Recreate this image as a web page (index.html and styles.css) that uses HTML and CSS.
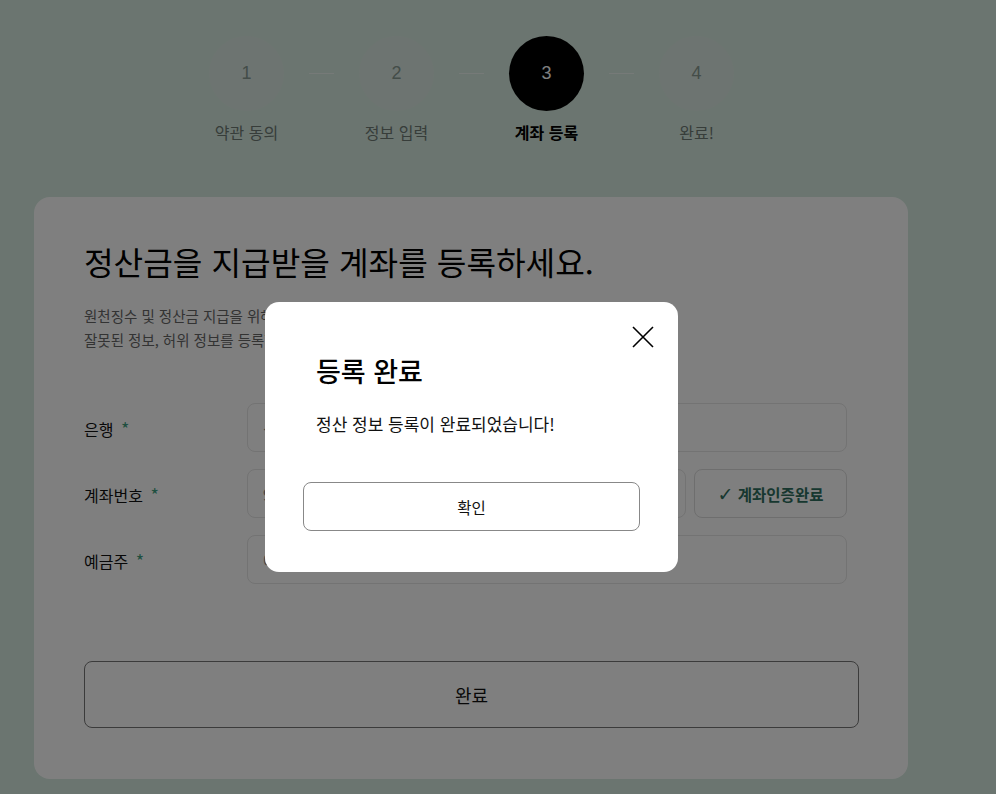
FILE: index.html
```html
<!DOCTYPE html>
<html lang="ko">
<head>
    <meta charset="UTF-8">
    <meta name="viewport" content="width=device-width, initial-scale=1.0">
    <title>계좌 등록</title>
    <link rel="stylesheet" href="styles.css">
</head>
<body>
<div class="wrap">
    <div class="stepper">
        <div class="step">
            <div class="circle">1</div>
            <div class="step-label">약관 동의</div>
        </div>
        <div class="line"></div>
        <div class="step">
            <div class="circle">2</div>
            <div class="step-label">정보 입력</div>
        </div>
        <div class="line"></div>
        <div class="step active">
            <div class="circle">3</div>
            <div class="step-label">계좌 등록</div>
        </div>
        <div class="line"></div>
        <div class="step">
            <div class="circle">4</div>
            <div class="step-label">완료!</div>
        </div>
    </div>

    <div class="card">
        <h1>정산금을 지급받을 계좌를 등록하세요.</h1>
        <p class="desc">
            원천징수 및 정산금 지급을 위해 정확한 계좌 정보를 입력해 주세요.<br>
            잘못된 정보, 허위 정보를 등록할 경우 정산이 지연될 수 있습니다.
        </p>

        <div class="form">
            <div class="row">
                <label>은행 <span class="req">*</span></label>
                <div class="input">선택해 주세요</div>
            </div>
            <div class="row">
                <label>계좌번호 <span class="req">*</span></label>
                <div class="input">92960201041</div>
                <button class="verify"><span class="check">✓</span> 계좌인증완료</button>
            </div>
            <div class="row">
                <label>예금주 <span class="req">*</span></label>
                <div class="input">예금주명</div>
            </div>
        </div>

        <button class="submit">완료</button>
    </div>
</div>

<div class="overlay">
    <div class="modal">
        <button class="close" aria-label="닫기">
            <svg width="22" height="22" viewBox="0 0 22 22">
                <path d="M1 1 L21 21 M21 1 L1 21" stroke="#000" stroke-width="1.6" fill="none"/>
            </svg>
        </button>
        <h2>등록 완료</h2>
        <p class="msg">정산 정보 등록이 완료되었습니다!</p>
        <button class="ok">확인</button>
    </div>
</div>
</body>
</html>
```

FILE: styles.css
```css
body {
    margin: 0;
    padding: 0;
    background-color: #d7ebe1;
    font-family: "Noto Sans CJK KR", "Noto Sans", sans-serif;
    color: #111;
    overflow: hidden;
}
.wrap {
    width: 874px;
    margin-left: 34px;
    padding-top: 36px;
}
.stepper {
    display: flex;
    justify-content: center;
    align-items: flex-start;
    padding-left: 1px;
}
.step {
    width: 75px;
    display: flex;
    flex-direction: column;
    align-items: center;
}
.circle {
    width: 75px;
    height: 75px;
    border-radius: 50%;
    background-color: #dbe9e2;
    color: #889a92;
    font-family: "Liberation Sans", Arial, sans-serif;
    font-size: 18px;
    display: flex;
    align-items: center;
    justify-content: center;
}
.step-label {
    margin-top: 11px;
    font-size: 16px;
    line-height: 20px;
    color: #6e7a74;
    white-space: nowrap;
}
.step.active .circle {
    background-color: #000;
    color: #fff;
}
.step.active .step-label {
    color: #000;
    font-weight: 700;
}
.line {
    width: 25px;
    height: 1px;
    margin: 37px 25px 0;
    background-color: #edf5f1;
}
.card {
    margin-top: 55px;
    background-color: #fff;
    border-radius: 16px;
    padding: 44px 49px 51px 50px;
}
.card h1 {
    margin: 0;
    font-size: 32.2px;
    line-height: 40px;
    font-weight: 400;
    color: #000;
}
.desc {
    margin: 23px 0 0;
    font-size: 14.5px;
    line-height: 24px;
    color: #666;
}
.form {
    margin-top: 51px;
    width: 763px;
    display: flex;
    flex-direction: column;
    gap: 17px;
}
.row {
    display: flex;
    align-items: center;
    gap: 8px;
}
.row label {
    width: 155px;
    font-size: 16px;
    color: #111;
}
.req {
    color: #3f9f80;
    font-size: 18px;
    margin-left: 3px;
}
.input {
    flex: 1;
    height: 49px;
    box-sizing: border-box;
    border: 1px solid #e6e6e6;
    border-radius: 8px;
    padding: 0 15px;
    display: flex;
    align-items: center;
    font-size: 16px;
    color: #888;
}
.verify {
    width: 153px;
    height: 49px;
    border: 1px solid #ddd;
    border-radius: 8px;
    background: #fff;
    font-family: inherit;
    font-size: 15.5px;
    font-weight: 700;
    color: #2f6f5f;
    cursor: pointer;
    padding: 0;
}
.check {
    font-weight: 400;
    font-size: 19px;
    font-family: "DejaVu Sans", sans-serif;
}
.submit {
    display: block;
    margin-top: 77px;
    width: 775px;
    height: 67px;
    border: 1px solid #777;
    border-radius: 8px;
    background: #fff;
    font-family: inherit;
    font-size: 18px;
    color: #111;
    cursor: pointer;
}
.overlay {
    position: fixed;
    inset: 0;
    background-color: rgba(0, 0, 0, 0.5);
}
.modal {
    position: absolute;
    left: 265px;
    top: 302px;
    width: 413px;
    height: 270px;
    box-sizing: border-box;
    background-color: #fff;
    border-radius: 14px;
    padding: 50px 38px 0;
}
.close {
    position: absolute;
    top: 24px;
    right: 24px;
    width: 22px;
    height: 22px;
    padding: 0;
    border: none;
    background: none;
    cursor: pointer;
}
.modal h2 {
    margin: 0 0 0 13px;
    font-size: 27px;
    line-height: 38px;
    font-weight: 500;
    color: #000;
}
.msg {
    margin: 22px 0 0 13px;
    font-size: 17px;
    line-height: 24px;
    color: #111;
}
.ok {
    display: block;
    margin-top: 46px;
    width: 337px;
    height: 49px;
    border: 1px solid #888;
    border-radius: 8px;
    background: #fff;
    font-family: inherit;
    font-size: 15.5px;
    color: #111;
    cursor: pointer;
}
```
